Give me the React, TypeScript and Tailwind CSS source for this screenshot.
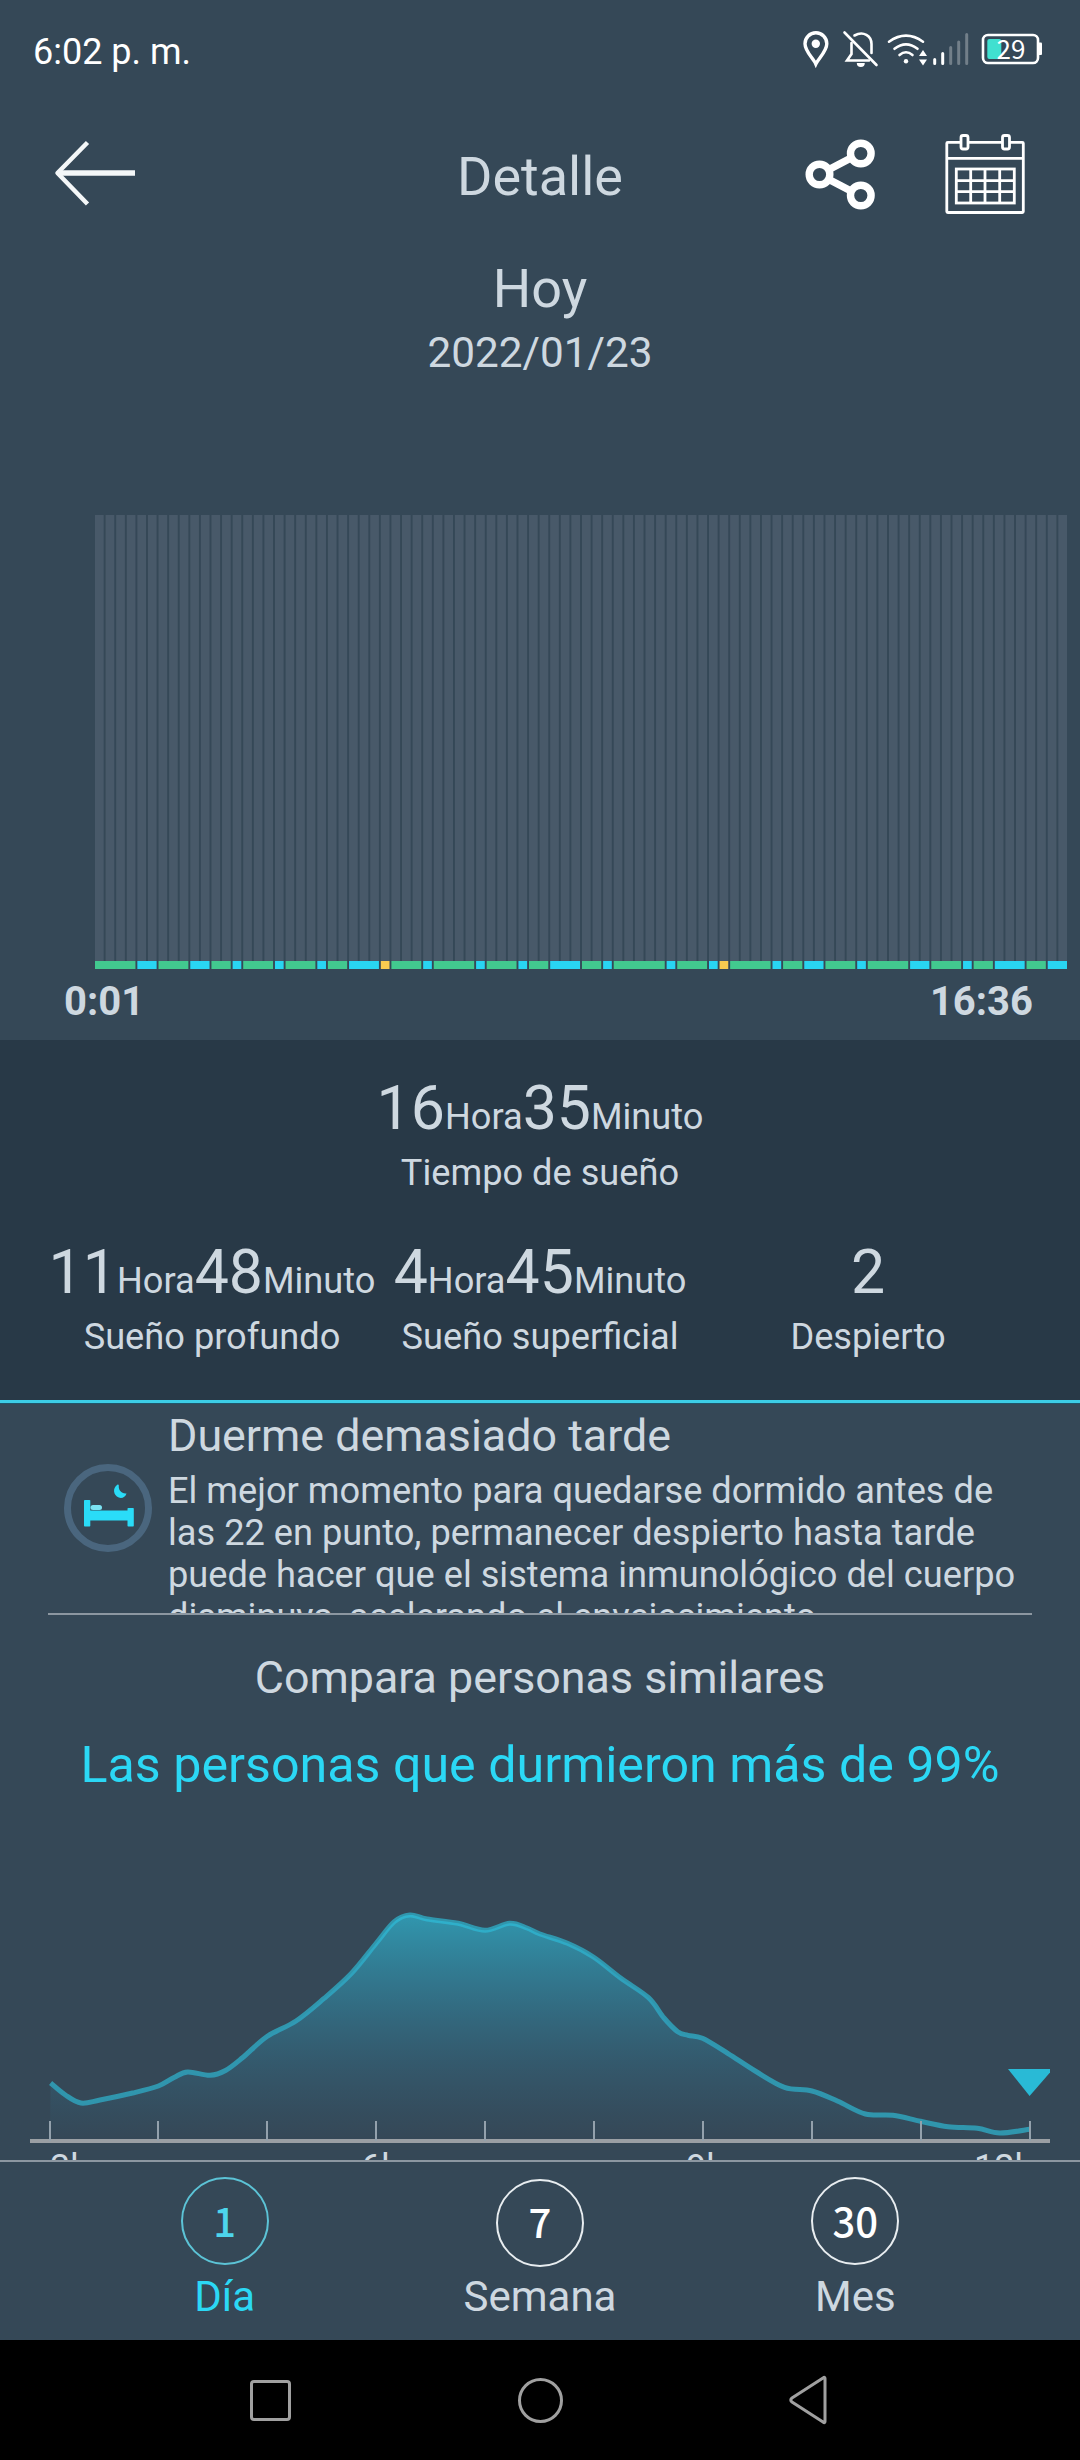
import type { ReactNode } from 'react'

type Stage = 'deep' | 'light' | 'awake'

interface Point {
  x: number
  y: number
}

const STAGE_COLORS: Record<Stage, string> = {
  deep: '#42c98f',
  light: '#29d5f2',
  awake: '#f8cb50',
}

// Sleep stages in order, with their length in bars
const STAGES: [Stage, number][] = [
  ['deep', 4], ['light', 2], ['deep', 3], ['light', 2], ['deep', 2], ['light', 1],
  ['deep', 3], ['light', 1], ['deep', 3], ['light', 1], ['deep', 2], ['light', 3],
  ['awake', 1], ['deep', 3], ['light', 1], ['deep', 4], ['light', 1], ['deep', 3],
  ['light', 1], ['deep', 2], ['light', 3], ['deep', 2], ['light', 1], ['deep', 5],
  ['light', 1], ['deep', 3], ['light', 1], ['awake', 1], ['deep', 4], ['light', 1],
  ['deep', 2], ['light', 2], ['deep', 3], ['light', 1], ['deep', 4], ['light', 2],
  ['deep', 3], ['light', 1], ['deep', 2], ['light', 3], ['deep', 2], ['light', 2],
]

const CHART_WIDTH = 972
const BAR_GAP = 1.9
const BAR_COUNT = STAGES.reduce((sum, [, n]) => sum + n, 0)
const PITCH = (CHART_WIDTH + BAR_GAP) / BAR_COUNT

const CURVE: Point[] = [
  [50.6, 288], [65.4, 300], [81, 308], [100, 305], [132.6, 298], [158.4, 291], [174, 282.5],
  [187.7, 277], [210, 280.3], [225.5, 275.5], [242.8, 262.5], [267, 241.5], [296, 226],
  [323.7, 203.7], [351.3, 178.5], [376, 148.5], [394.3, 126.7], [409.8, 120], [427, 124],
  [458, 128.3], [485, 135.3], [509.6, 128.3], [527, 133], [540, 139], [567.5, 148.3],
  [593.4, 162], [621, 183.3], [648.5, 202.7], [664, 223], [677.7, 236.7], [688, 240.3],
  [702.5, 243.3], [727.7, 258.3], [755.2, 276], [784.5, 292.3], [812, 296], [837.9, 306.3],
  [865.4, 319], [893, 320.3], [920.5, 326.3], [948, 331.7], [977.3, 333.3], [999.7, 338],
  [1029.7, 334.3],
].map(([x, y]) => ({ x, y }))

const TICKS = [50, 158, 267, 376, 485, 594, 703, 812, 921, 1030]

const HOUR_LABELS = [
  { x: 50, text: '3h' },
  { x: 361, text: '6h' },
  { x: 686, text: '9h' },
  { x: 974, text: '12h' },
]

// Catmull-Rom spline through the points, as cubic beziers
function smoothPath(points: Point[]): string {
  let d = `M${points[0].x} ${points[0].y}`
  for (let i = 0; i < points.length - 1; i++) {
    const p0 = points[i - 1] ?? points[i]
    const p1 = points[i]
    const p2 = points[i + 1]
    const p3 = points[i + 2] ?? p2
    d += ` C${p1.x + (p2.x - p0.x) / 6} ${p1.y + (p2.y - p0.y) / 6}`
    d += ` ${p2.x - (p3.x - p1.x) / 6} ${p2.y - (p3.y - p1.y) / 6} ${p2.x} ${p2.y}`
  }
  return d
}

function StatusBar() {
  return (
    <div className="flex h-[104px] items-center justify-between pl-[33px]">
      <span className="text-[36px] leading-[42px] text-white">6:02 p. m.</span>
      <svg width="280" height="104" viewBox="800 0 280 104" fill="none" stroke="#fff">
        {/* Location */}
        <path
          d="M815.8 64c-2.2-5.2-10.8-12.5-10.8-20.3a10.9 10.9 0 0 1 21.8 0c0 7.8-8.7 15.1-11 20.3z"
          strokeWidth="3.4"
        />
        <circle cx="815.8" cy="43.7" r="4.2" fill="#fff" stroke="none" />
        {/* Muted bell */}
        <g strokeWidth="2.6" strokeLinecap="round">
          <path d="M844.5 32.5l32 32.5" />
          <path d="M854.5 35.5c9-5 17 0.5 17 8.500v9" />
          <path d="M851.5 43v11l-4.500 6.500h22" />
        </g>
        <path d="M856.8 63h8a4 4 0 0 1-8 0z" fill="#fff" stroke="none" />
        {/* Wifi */}
        <g strokeWidth="2.6" strokeLinecap="round">
          <path d="M889 41.7q17-12 34 0" />
          <path d="M894.5 48.800q11.500-9 23 0" />
          <path d="M899.5 55q6.500-5.500 13 0" />
        </g>
        <circle cx="906" cy="61.3" r="2.2" fill="#fff" stroke="none" />
        <path d="M919 56l4-6 4 6zM919 59.5l4 6 4-6z" fill="#fff" stroke="none" />
        {/* Signal */}
        <g strokeWidth="3" strokeLinecap="round">
          <path d="M934.7 59.5v4M942.7 53.5v10" />
          <path d="M950.7 47.5v16M958.7 42v21.5M966.7 34.5v29" strokeOpacity="0.3" />
        </g>
        {/* Battery */}
        <rect x="983" y="35" width="55" height="28" rx="5" strokeWidth="2.6" />
        <path d="M1039 42.5h2a1 1 0 0 1 1 1v10.500a1 1 0 0 1-1 1h-2z" fill="#fff" stroke="none" />
        <rect x="987.3" y="39" width="14" height="20" rx="2" fill="#40e0d0" stroke="none" />
        <text
          x="1011"
          y="59"
          textAnchor="middle"
          fill="#fff"
          stroke="none"
          className="font-['Noto_Sans_CJK_SC',sans-serif] text-[26px]"
        >
          29
        </text>
      </svg>
    </div>
  )
}

function Header() {
  return (
    <header className="grid h-[145px] grid-cols-[270px_1fr_270px] items-center">
      <svg width="270" height="145" viewBox="0 104 270 145" fill="none" stroke="#f4f7f8">
        <path d="M58 173h77" strokeWidth="5.5" />
        <path d="M87.500 142.500L57.500 173l30 31" strokeWidth="4.5" strokeLinejoin="round" />
      </svg>
      <h1 className="text-center text-[54px] leading-[64px]">Detalle</h1>
      <svg width="280" height="145" viewBox="800 104 280 145" fill="none" className="-ml-[10px]">
        {/* Share */}
        <g stroke="#fff" strokeWidth="7.4">
          <circle cx="819.5" cy="174.5" r="10.3" />
          <circle cx="860.8" cy="153.5" r="10.3" />
          <circle cx="860.8" cy="195.5" r="10.3" />
          <path d="M829 169.500l22-11.500M829 179.500l22 11.500" />
        </g>
        {/* Calendar */}
        <g stroke="#fff" strokeWidth="2.8">
          <rect x="946.8" y="142.3" width="76.5" height="70.2" rx="1" />
          <path d="M946.8 158.3h76.5" />
          <g fill="#354857">
            <rect x="961" y="135.5" width="7" height="13.5" rx="2" />
            <rect x="1002.5" y="135.5" width="7" height="13.5" rx="2" />
          </g>
          <rect x="956.3" y="169" width="58" height="34" />
          <path d="M970.7 169v34M985 169v34M999.7 169v34M956 180.7h58M956 191.7h58" />
        </g>
      </svg>
    </header>
  )
}

function StageChart() {
  let start = 0
  return (
    <svg width={CHART_WIDTH} height="454" className="ml-[95px] block">
      {Array.from({ length: BAR_COUNT }, (_, i) => (
        <rect key={i} x={i * PITCH} y="0" width={PITCH - BAR_GAP} height="446" fill="#485969" />
      ))}
      {STAGES.map(([stage, n], i) => {
        const x = start * PITCH
        start += n
        return (
          <rect
            key={i}
            x={x}
            y="446"
            width={n * PITCH - BAR_GAP}
            height="8"
            fill={STAGE_COLORS[stage]}
          />
        )
      })}
    </svg>
  )
}

interface StatProps {
  hours?: number
  minutes?: number
  count?: number
  label: string
}

function Stat({ hours, minutes, count, label }: StatProps) {
  return (
    <div className="flex flex-col items-center whitespace-nowrap text-[36.2px] leading-none">
      <div className="flex h-[60px] items-baseline">
        {count !== undefined ? (
          <span className="text-[60.8px] leading-[60px]">{count}</span>
        ) : (
          <>
            <span className="text-[60.8px] leading-[60px]">{hours}</span>
            <span>Hora</span>
            <span className="text-[60.8px] leading-[60px]">{minutes}</span>
            <span>Minuto</span>
          </>
        )}
      </div>
      <span className="mt-3 leading-[44px]">{label}</span>
    </div>
  )
}

function BedIcon() {
  return (
    <svg width="88" height="88" viewBox="6 6 88 88" className="mt-[60px] shrink-0">
      <circle cx="50" cy="50" r="40.5" fill="none" stroke="#4a667e" strokeWidth="7" />
      <g fill="#2adcf8">
        <rect x="26" y="42" width="6.3" height="26.5" rx="0.8" />
        <rect x="69.5" y="50" width="6.3" height="18.5" rx="0.8" />
        <rect x="31" y="52.5" width="40" height="10" />
        <rect x="32.5" y="47" width="11.5" height="5" rx="2.5" fill="#7be3f3" />
        <path d="M59.3 26.800c-5 3.500-4 10.500 1.500 12.800 3.500 1 6.500-0.600 7.700-4.200-5 0.500-8.200-3-7.700-7.800-0.100-1.200-0.800-1.300-1.500-0.800z" />
      </g>
    </svg>
  )
}

function CompareChart() {
  const line = smoothPath(CURVE)
  return (
    <svg width="1080" height="365" className="block">
      <defs>
        <linearGradient id="area" gradientUnits="userSpaceOnUse" x1="0" y1="118" x2="0" y2="344">
          <stop offset="0" stopColor="#2ec2df" stopOpacity="0.65" />
          <stop offset="1" stopColor="#2f7fa5" stopOpacity="0" />
        </linearGradient>
      </defs>
      <path d={line} fill="none" stroke="#3096ad" strokeWidth="5" />
      <path d={`${line} V345 H50 Z`} fill="url(#area)" />
      <path d="M30 346h1020" stroke="#9a9fa4" strokeWidth="4" />
      {TICKS.map((x) => (
        <path key={x} d={`M${x} 326v20`} stroke="#93a1ac" strokeWidth="2" />
      ))}
      <path d="M1008 274h42v3.500L1029.6 301z" fill="#29bad6" />
      {HOUR_LABELS.map(({ x, text }) => (
        <text key={text} x={x} y="385" fill="#ced8e0" className="text-[36px]">
          {text}
        </text>
      ))}
    </svg>
  )
}

interface TabProps {
  days: number
  label: string
  active?: boolean
}

function Tab({ days, label, active }: TabProps) {
  return (
    <button className={`flex flex-col items-center ${active ? 'text-[#2bd8f5]' : ''}`}>
      <span
        className={`flex size-[88px] items-center justify-center rounded-full border-[2.5px] pb-[3px] font-['Noto_Sans_CJK_SC',sans-serif] text-[40px] leading-none font-medium ${
          active ? 'border-[#5cc3d6] text-[#4dd5ec]' : 'border-[#e8edf0] text-white'
        } ${days === 7 ? 'relative top-[1.5px]' : ''}`}
      >
        {days}
      </span>
      <span className="mt-[7px] text-[42px] leading-[50px]">{label}</span>
    </button>
  )
}

function NavBar({ children }: { children: ReactNode }) {
  return (
    <nav className="grid h-[120px] grid-cols-3 place-items-center bg-black px-[135px]">{children}</nav>
  )
}

export default function App() {
  return (
    <div className="flex h-[2460px] w-[1080px] flex-col overflow-hidden bg-[#354857] font-[Roboto,sans-serif] text-[#ced8e0]">
      <StatusBar />
      <Header />

      {/* Date and stage chart */}
      <section className="h-[791px] pt-2">
        <h2 className="text-center text-[54px] leading-[64px]">Hoy</h2>
        <p className="text-center text-[42.3px] leading-[64px]">2022/01/23</p>
        <div className="pt-[130px]">
          <StageChart />
        </div>
        <div className="flex justify-between pr-[47px] pl-[64px] text-[40px] leading-[66px] font-bold">
          <span>0:01</span>
          <span>16:36</span>
        </div>
      </section>

      {/* Totals */}
      <section className="h-[360px] bg-[#283947] pt-[39px]">
        <Stat hours={16} minutes={35} label="Tiempo de sueño" />
        <div className="mt-12 grid grid-cols-3 px-[48px]">
          <Stat hours={11} minutes={48} label="Sueño profundo" />
          <Stat hours={4} minutes={45} label="Sueño superficial" />
          <Stat count={2} label="Despierto" />
        </div>
      </section>
      <div className="h-1 border-b border-[#1f566b] bg-[#3ccde6]" />

      {/* Tip */}
      <section className="mx-[48px] flex h-[211px] gap-4 overflow-hidden border-b-2 border-[#8c97a1] pl-4">
        <BedIcon />
        <div className="w-[864px] shrink-0">
          <h3 className="mt-[5px] text-[44.8px] leading-[54px]">Duerme demasiado tarde</h3>
          <p className="mt-[7px] w-[858px] text-[36.2px] leading-[42px]">
            El mejor momento para quedarse dormido antes de las 22 en punto, permanecer despierto
            hasta tarde puede hacer que el sistema inmunológico del cuerpo disminuya, acelerando el
            envejecimiento.
          </p>
        </div>
      </section>

      {/* Comparison */}
      <section className="h-[545px] overflow-hidden pt-[36px] text-center">
        <h3 className="text-[44.8px] leading-[54px]">Compara personas similares</h3>
        <p className="mt-[30px] text-[50.2px] leading-[60px] text-[#2bd8f5]">
          Las personas que durmieron más de 99%
        </p>
        <CompareChart />
      </section>

      {/* Period tabs */}
      <div className="grid h-[180px] grid-cols-3 items-start border-t-2 border-[#8c97a1] px-[67px] pt-[15px]">
        <Tab days={1} label="Día" active />
        <Tab days={7} label="Semana" />
        <Tab days={30} label="Mes" />
      </div>

      <NavBar>
        <span className="size-[41px] rounded-[4px] border-3 border-[#a0a0a0]" />
        <span className="size-[45px] rounded-full border-3 border-[#a0a0a0]" />
        <svg width="46" height="50" fill="none" stroke="#a0a0a0" strokeWidth="3">
          <path d="M38 3.500v43q0 2-2 0.500L5 27q-2.500-2 0-4L36 3q2-1.500 2 0.500z" />
        </svg>
      </NavBar>
    </div>
  )
}
